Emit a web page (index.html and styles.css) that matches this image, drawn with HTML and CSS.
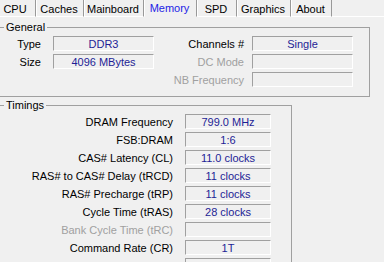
FILE: index.html
```html
<html>
<head>
  <title>CPU-Z Memory</title>
  <link rel="stylesheet" href="styles.css">
</head>
<body>
  <div class="tabs">
    <span class="tab cpu">CPU</span>
    <span class="tab caches">Caches</span>
    <span class="tab mainboard">Mainboard</span>
    <span class="tab memory on">Memory</span>
    <span class="tab spd">SPD</span>
    <span class="tab graphics">Graphics</span>
    <span class="tab about">About</span>
    <span class="fill"></span>
  </div>

  <fieldset class="group general">
    <legend>General</legend>
    <div class="genGrid">
      <span class="lbl">Type</span>
      <span class="val">DDR3</span>
      <span class="lbl r">Channels #</span>
      <span class="val">Single</span>

      <span class="lbl">Size</span>
      <span class="val">4096 MBytes</span>
      <span class="lbl r off">DC Mode</span>
      <span class="val"></span>

      <span></span>
      <span></span>
      <span class="lbl r off">NB Frequency</span>
      <span class="val"></span>
    </div>
  </fieldset>

  <fieldset class="group timings">
    <legend>Timings</legend>
    <div class="timGrid">
      <span class="lbl">DRAM Frequency</span>
      <span class="val">799.0 MHz</span>
      <span class="lbl">FSB:DRAM</span>
      <span class="val">1:6</span>
      <span class="lbl">CAS# Latency (CL)</span>
      <span class="val">11.0 clocks</span>
      <span class="lbl">RAS# to CAS# Delay (tRCD)</span>
      <span class="val">11 clocks</span>
      <span class="lbl">RAS# Precharge (tRP)</span>
      <span class="val">11 clocks</span>
      <span class="lbl">Cycle Time (tRAS)</span>
      <span class="val">28 clocks</span>
      <span class="lbl off">Bank Cycle Time (tRC)</span>
      <span class="val"></span>
      <span class="lbl">Command Rate (CR)</span>
      <span class="val">1T</span>
      <span class="lbl"></span>
      <span class="val"></span>
    </div>
  </fieldset>
</body>
</html>
```

FILE: styles.css
```css
html, body {
  margin: 0;
  height: 100%;
  overflow: hidden;
  background: #f0f0f0;
}

body {
  font-family: "Liberation Sans", Arial, sans-serif;
  font-size: 11px;
  color: #000;
}

/* tab strip */
.tabs {
  display: flex;
  height: 17px;
  margin-left: -4px;
}

.tab {
  box-sizing: border-box;
  height: 17px;
  padding: 2px 2px 0 0;
  line-height: 14px;
  text-align: center;
  white-space: nowrap;
  border-left: 1px solid #fff;
  border-right: 1px solid #999;
  border-bottom: 1px solid #fff;
}

.tab.on {
  color: #2323e6;
  padding-top: 1px;
  border-bottom-color: #f0f0f0;
}

.cpu { width: 40px; }
.caches { width: 48px; }
.mainboard { width: 60px; }
.memory { width: 53px; }
.spd { width: 40px; }
.graphics { width: 54px; }
.about { width: 41px; }

.fill {
  flex: 1;
  border-bottom: 1px solid #fff;
}

/* group boxes */
.group {
  box-sizing: border-box;
  margin: 0 0 0 -2px;
  padding: 2px 0 9px 0;
  border: 1px solid #a0a0a0;
  min-width: 0;
}

.group legend {
  margin-left: 5px;
  padding: 0 2px;
  line-height: 13px;
}

.general {
  margin-top: 4px;
  width: 372px;
}

.timings {
  margin-top: 2px;
  width: 294px;
  padding-bottom: 40px;
}

.genGrid {
  display: grid;
  grid-template-columns: 54px 101px 98px 101px;
  grid-auto-rows: 15px;
  row-gap: 3px;
}

.timGrid {
  display: grid;
  grid-template-columns: 186px 86px;
  grid-auto-rows: 15px;
  row-gap: 3px;
}

.lbl {
  text-align: right;
  padding: 2px 12px 0 0;
  line-height: 13px;
  white-space: nowrap;
}

.lbl.r {
  padding-right: 8px;
}

.off {
  color: #a0a0a0;
}

.val {
  box-sizing: border-box;
  height: 15px;
  padding-top: 1px;
  line-height: 12px;
  text-align: center;
  color: #1e1e96;
  white-space: nowrap;
  border-top: 1px solid #a0a0a0;
  border-left: 1px solid #a0a0a0;
  border-right: 1px solid #fff;
  border-bottom: 1px solid #fff;
}
```
